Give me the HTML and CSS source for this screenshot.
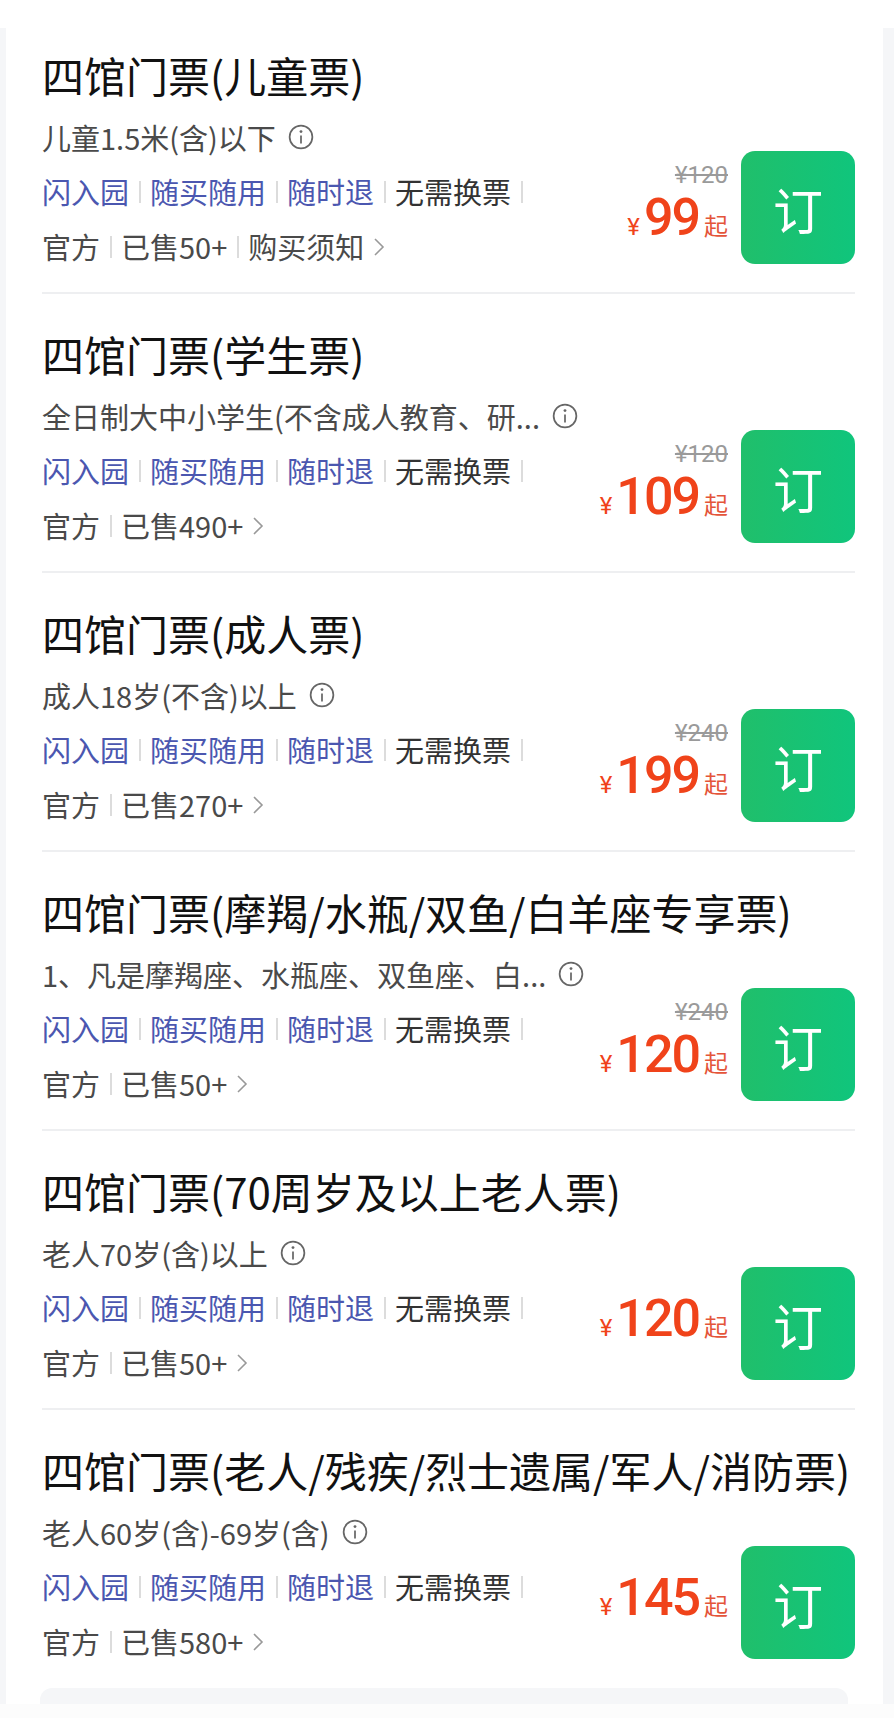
FILE: index.html
```html
<!DOCTYPE html>
<html lang="zh-CN">
<head>
  <meta charset="UTF-8">
  <meta name="viewport" content="width=device-width, initial-scale=1.0">
  <title>四馆门票</title>
  <link rel="stylesheet" href="styles.css">
</head>
<body>

  <div class="topbar"></div>

  <div class="page">
    <div class="card">

      <!-- 儿童票 -->
      <div class="ticket">
        <div class="ticket-name">四馆门票(儿童票)</div>
        <div class="ticket-body">
          <div class="ticket-info">
            <div class="ticket-desc">儿童1.5米(含)以下
              <svg class="info-icon" viewBox="0 0 24 24"><circle cx="12" cy="12" r="10.5"/><line x1="12" y1="10.5" x2="12" y2="18"/><circle class="dot" cx="12" cy="7" r="1.3"/></svg>
            </div>
            <div class="ticket-tags"><span class="tag-blue">闪入园</span><i class="sep"></i><span class="tag-blue">随买随用</span><i class="sep"></i><span class="tag-blue">随时退</span><i class="sep"></i><span>无需换票</span><i class="sep"></i></div>
            <div class="ticket-meta">官方<i class="sep"></i>已售50+<i class="sep"></i>购买须知
              <svg class="arrow" viewBox="0 0 14 24"><polyline points="3,4 11,12 3,20"/></svg>
            </div>
          </div>
          <div class="ticket-buy">
            <div class="price">
              <div class="price-old">¥120</div>
              <div class="price-now"><span class="yen">¥</span><span class="num">99</span><span class="qi">起</span></div>
            </div>
            <button class="btn-book">订</button>
          </div>
        </div>
      </div>

      <!-- 学生票 -->
      <div class="ticket">
        <div class="ticket-name">四馆门票(学生票)</div>
        <div class="ticket-body">
          <div class="ticket-info">
            <div class="ticket-desc">全日制大中小学生(不含成人教育、研...
              <svg class="info-icon" viewBox="0 0 24 24"><circle cx="12" cy="12" r="10.5"/><line x1="12" y1="10.5" x2="12" y2="18"/><circle class="dot" cx="12" cy="7" r="1.3"/></svg>
            </div>
            <div class="ticket-tags"><span class="tag-blue">闪入园</span><i class="sep"></i><span class="tag-blue">随买随用</span><i class="sep"></i><span class="tag-blue">随时退</span><i class="sep"></i><span>无需换票</span><i class="sep"></i></div>
            <div class="ticket-meta">官方<i class="sep"></i>已售490+
              <svg class="arrow" viewBox="0 0 14 24"><polyline points="3,4 11,12 3,20"/></svg>
            </div>
          </div>
          <div class="ticket-buy">
            <div class="price">
              <div class="price-old">¥120</div>
              <div class="price-now"><span class="yen">¥</span><span class="num">109</span><span class="qi">起</span></div>
            </div>
            <button class="btn-book">订</button>
          </div>
        </div>
      </div>

      <!-- 成人票 -->
      <div class="ticket">
        <div class="ticket-name">四馆门票(成人票)</div>
        <div class="ticket-body">
          <div class="ticket-info">
            <div class="ticket-desc">成人18岁(不含)以上
              <svg class="info-icon" viewBox="0 0 24 24"><circle cx="12" cy="12" r="10.5"/><line x1="12" y1="10.5" x2="12" y2="18"/><circle class="dot" cx="12" cy="7" r="1.3"/></svg>
            </div>
            <div class="ticket-tags"><span class="tag-blue">闪入园</span><i class="sep"></i><span class="tag-blue">随买随用</span><i class="sep"></i><span class="tag-blue">随时退</span><i class="sep"></i><span>无需换票</span><i class="sep"></i></div>
            <div class="ticket-meta">官方<i class="sep"></i>已售270+
              <svg class="arrow" viewBox="0 0 14 24"><polyline points="3,4 11,12 3,20"/></svg>
            </div>
          </div>
          <div class="ticket-buy">
            <div class="price">
              <div class="price-old">¥240</div>
              <div class="price-now"><span class="yen">¥</span><span class="num">199</span><span class="qi">起</span></div>
            </div>
            <button class="btn-book">订</button>
          </div>
        </div>
      </div>

      <!-- 星座专享票 -->
      <div class="ticket">
        <div class="ticket-name">四馆门票(摩羯/水瓶/双鱼/白羊座专享票)</div>
        <div class="ticket-body">
          <div class="ticket-info">
            <div class="ticket-desc">1、凡是摩羯座、水瓶座、双鱼座、白...
              <svg class="info-icon" viewBox="0 0 24 24"><circle cx="12" cy="12" r="10.5"/><line x1="12" y1="10.5" x2="12" y2="18"/><circle class="dot" cx="12" cy="7" r="1.3"/></svg>
            </div>
            <div class="ticket-tags"><span class="tag-blue">闪入园</span><i class="sep"></i><span class="tag-blue">随买随用</span><i class="sep"></i><span class="tag-blue">随时退</span><i class="sep"></i><span>无需换票</span><i class="sep"></i></div>
            <div class="ticket-meta">官方<i class="sep"></i>已售50+
              <svg class="arrow" viewBox="0 0 14 24"><polyline points="3,4 11,12 3,20"/></svg>
            </div>
          </div>
          <div class="ticket-buy">
            <div class="price">
              <div class="price-old">¥240</div>
              <div class="price-now"><span class="yen">¥</span><span class="num">120</span><span class="qi">起</span></div>
            </div>
            <button class="btn-book">订</button>
          </div>
        </div>
      </div>

      <!-- 老人票 -->
      <div class="ticket">
        <div class="ticket-name">四馆门票(70周岁及以上老人票)</div>
        <div class="ticket-body">
          <div class="ticket-info">
            <div class="ticket-desc">老人70岁(含)以上
              <svg class="info-icon" viewBox="0 0 24 24"><circle cx="12" cy="12" r="10.5"/><line x1="12" y1="10.5" x2="12" y2="18"/><circle class="dot" cx="12" cy="7" r="1.3"/></svg>
            </div>
            <div class="ticket-tags"><span class="tag-blue">闪入园</span><i class="sep"></i><span class="tag-blue">随买随用</span><i class="sep"></i><span class="tag-blue">随时退</span><i class="sep"></i><span>无需换票</span><i class="sep"></i></div>
            <div class="ticket-meta">官方<i class="sep"></i>已售50+
              <svg class="arrow" viewBox="0 0 14 24"><polyline points="3,4 11,12 3,20"/></svg>
            </div>
          </div>
          <div class="ticket-buy">
            <div class="price">
              <div class="price-now"><span class="yen">¥</span><span class="num">120</span><span class="qi">起</span></div>
            </div>
            <button class="btn-book">订</button>
          </div>
        </div>
      </div>

      <!-- 优待票 -->
      <div class="ticket">
        <div class="ticket-name">四馆门票(老人/残疾/烈士遗属/军人/消防票)</div>
        <div class="ticket-body">
          <div class="ticket-info">
            <div class="ticket-desc">老人60岁(含)-69岁(含)
              <svg class="info-icon" viewBox="0 0 24 24"><circle cx="12" cy="12" r="10.5"/><line x1="12" y1="10.5" x2="12" y2="18"/><circle class="dot" cx="12" cy="7" r="1.3"/></svg>
            </div>
            <div class="ticket-tags"><span class="tag-blue">闪入园</span><i class="sep"></i><span class="tag-blue">随买随用</span><i class="sep"></i><span class="tag-blue">随时退</span><i class="sep"></i><span>无需换票</span><i class="sep"></i></div>
            <div class="ticket-meta">官方<i class="sep"></i>已售580+
              <svg class="arrow" viewBox="0 0 14 24"><polyline points="3,4 11,12 3,20"/></svg>
            </div>
          </div>
          <div class="ticket-buy">
            <div class="price">
              <div class="price-now"><span class="yen">¥</span><span class="num">145</span><span class="qi">起</span></div>
            </div>
            <button class="btn-book">订</button>
          </div>
        </div>
      </div>

      <div class="more"></div>
    </div>
  </div>

  <div class="bottombar"></div>

</body>
</html>
```

FILE: styles.css
```css
body {
  margin: 0;
  padding: 0;
  background-color: #fff;
  font-family: "Noto Sans CJK SC", "Noto Sans", sans-serif;
  color: #111;
}
.topbar {
  height: 28px;
  background-color: #fff;
}
.page {
  background-color: #f5f6f8;
  padding: 0 11px 0 6px;
}
.card {
  background-color: #fff;
  padding: 0 28px 0 36px;
}

/* One ticket row */
.ticket {
  padding: 32px 0 18px;
  border-bottom: 2px solid #eeeff1;
}
.ticket:first-child {
  padding-top: 19px;
}
.ticket:nth-last-child(2) {
  border-bottom: none;
}
.ticket-name {
  font-size: 42px;
  font-weight: 400;
  line-height: 56px;
  color: #111;
  white-space: nowrap;
}
.ticket-body {
  display: flex;
  justify-content: space-between;
  align-items: flex-end;
  margin-top: 7px;
}
.ticket-info {
  min-width: 0;
}
.ticket-desc {
  display: flex;
  align-items: center;
  gap: 12px;
  font-size: 29px;
  line-height: 54px;
  color: #4a4a4a;
  white-space: nowrap;
}
.info-icon {
  width: 26px;
  height: 26px;
  fill: none;
  stroke: #666;
  stroke-width: 1.6;
}
.info-icon .dot {
  fill: #666;
  stroke: none;
}
.ticket-tags,
.ticket-meta {
  display: flex;
  align-items: center;
  font-size: 29px;
  line-height: 55px;
  white-space: nowrap;
}
.ticket-tags {
  color: #333;
}
.tag-blue {
  color: #4b57b0;
}
.ticket-meta {
  color: #4a4a4a;
}
.sep {
  display: inline-block;
  width: 2px;
  height: 22px;
  margin: 0 9.5px;
  background-color: #dcdcdc;
}
.arrow {
  width: 14px;
  height: 24px;
  margin-left: 8px;
  fill: none;
  stroke: #999;
  stroke-width: 1.6;
}

/* Price and book button */
.ticket-buy {
  display: flex;
  align-items: center;
  gap: 13px;
  margin-bottom: 10px;
}
.price {
  text-align: right;
}
.price-old {
  font-family: Roboto, "Noto Sans", sans-serif;
  font-size: 24px;
  line-height: 30px;
  color: #9a9a9a;
  text-decoration: line-through;
}
.price-now {
  display: flex;
  justify-content: flex-end;
  align-items: baseline;
  line-height: 55px;
  color: #f0431a;
}
.yen {
  font-family: Roboto, sans-serif;
  font-size: 24px;
  margin-right: 4px;
}
.num {
  font-family: Roboto, sans-serif;
  font-size: 52px;
  font-weight: 500;
  letter-spacing: -2px;
}
.qi {
  font-size: 24px;
  margin-left: 5px;
  color: #e4553a;
}
.btn-book {
  width: 114px;
  height: 113px;
  border: none;
  border-radius: 14px;
  background: linear-gradient(90deg, #20bf6b, #10c57c);
  color: #fff;
  font-family: "Noto Sans CJK SC", sans-serif;
  font-size: 50px;
  padding: 0;
  cursor: pointer;
}

.more {
  height: 16px;
  margin: 1px 7px 0 -2px;
  border-radius: 12px 12px 0 0;
  background-color: #f5f6f8;
}
.bottombar {
  height: 14px;
  background-color: #fcfcfc;
}
```
